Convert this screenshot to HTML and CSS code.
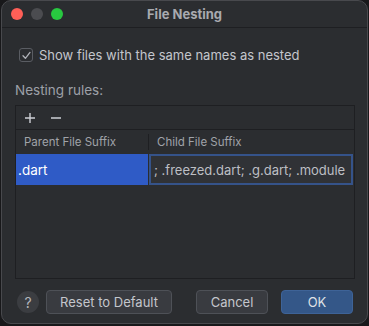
FILE: index.html
```html
<!DOCTYPE html>
<html lang="en">
<head>
    <meta charset="UTF-8">
    <title>File Nesting</title>
    <link rel="stylesheet" href="styles.css">
</head>
<body>
    <div class="window">
        <div class="titlebar">
            <div class="lights">
                <span class="light red"></span>
                <span class="light gray"></span>
                <span class="light green"></span>
            </div>
            <div class="title">File Nesting</div>
            <div></div>
        </div>

        <div class="content">
            <label class="check-row">
                <span class="checkbox">
                    <svg width="11" height="11" viewBox="0 0 11 11"><path d="M2 5.8 L4.4 8.3 L9 2.4" fill="none" stroke="#aeb0b6" stroke-width="1.3" stroke-linecap="round" stroke-linejoin="round"/></svg>
                </span>
                Show files with the same names as nested
            </label>

            <div class="section-label">Nesting rules:</div>

            <div class="rules">
                <div class="toolbar">
                    <svg class="tool" width="12" height="12" viewBox="0 0 12 12"><path d="M6 1 V11 M1 6 H11" stroke="#ced0d6" stroke-width="1.4"/></svg>
                    <svg class="tool" width="12" height="12" viewBox="0 0 12 12"><path d="M1 6 H11" stroke="#ced0d6" stroke-width="1.4"/></svg>
                </div>
                <div class="grid header">
                    <div class="cell">Parent File Suffix</div>
                    <div class="cell">Child File Suffix</div>
                </div>
                <div class="grid row">
                    <div class="cell selected">.dart</div>
                    <div class="cell editor">; .freezed.dart; .g.dart; .module</div>
                </div>
                <div class="empty"></div>
            </div>
        </div>

        <div class="footer">
            <span class="help">?</span>
            <button class="btn">Reset to Default</button>
            <span class="spacer"></span>
            <button class="btn">Cancel</button>
            <button class="btn primary">OK</button>
        </div>
    </div>
</body>
</html>
```

FILE: styles.css
```css
/* Dialog */
body {
    margin: 0;
    padding: 0;
    background: #18181a;
    font-family: 'Inter', 'Noto Sans', sans-serif;
    font-size: 13px;
    color: #c4c6cc;
}
.window {
    width: 365px;
    height: 322px;
    margin-left: 1px;
    background: #2b2d30;
    border: 1px solid #48494d;
    border-radius: 10px;
    display: flex;
    flex-direction: column;
    overflow: hidden;
}
.titlebar {
    height: 28px;
    border-bottom: 1px solid #1e1f22;
    display: grid;
    grid-template-columns: 1fr auto 1fr;
    align-items: center;
}
.lights {
    display: flex;
    gap: 8px;
    padding-left: 9px;
}
.light {
    width: 12px;
    height: 12px;
    border-radius: 50%;
}
.light.red { background: #fe5f57; }
.light.gray { background: #4b4c50; }
.light.green { background: #28c840; }
.title {
    font-weight: 700;
    color: #a8aaaf;
    font-size: 13px;
}

.content {
    padding: 0 12px 0 13px;
    flex: 1;
    display: flex;
    flex-direction: column;
}
.check-row {
    display: flex;
    align-items: center;
    gap: 6px;
    margin-top: 20px;
    padding-left: 4px;
    height: 14px;
}
.checkbox {
    width: 12px;
    height: 12px;
    border: 1px solid #5a5d63;
    border-radius: 3px;
    background: #2b2d30;
    display: flex;
    align-items: center;
    justify-content: center;
}
.section-label {
    margin-top: 20px;
    height: 16px;
    color: #9da0a8;
    font-size: 13.5px;
}
.rules {
    margin-top: 7px;
    border: 1px solid #1e1f22;
    height: 172px;
    display: flex;
    flex-direction: column;
}
.toolbar {
    height: 23px;
    border-bottom: 1px solid #1e1f22;
    display: flex;
    align-items: center;
    gap: 14px;
    padding-left: 8px;
}
.grid {
    display: grid;
    grid-template-columns: 132px 1fr;
}
.header {
    height: 24px;
    align-items: center;
    font-size: 11.5px;
    color: #a0a3a9;
}
.header .cell {
    padding-left: 8px;
    line-height: 16px;
}
.header .cell + .cell {
    border-left: 1px solid #1e1f22;
    padding-left: 8px;
}
.row {
    height: 31px;
}
.row .cell {
    display: flex;
    align-items: center;
}
.selected {
    background: #2f5bc6;
    color: #ffffff;
    padding-left: 2px;
    font-size: 13.5px;
}
.editor {
    background: #303236;
    border: 2px solid #35538a;
    padding-left: 3px;
    margin-left: 1px;
    margin-right: 1px;
    color: #bdbfc4;
    font-size: 13px;
    white-space: nowrap;
    overflow: hidden;
}
.empty {
    flex: 1;
}

.footer {
    height: 45px;
    display: flex;
    align-items: center;
    padding: 2px 14px 0 15px;
    gap: 7px;
}
.help {
    width: 22px;
    height: 22px;
    border-radius: 50%;
    background: #3b3d41;
    color: #b4b6bc;
    font-size: 14px;
    display: flex;
    align-items: center;
    justify-content: center;
}
.btn {
    height: 24px;
    padding: 0 12px;
    font-family: inherit;
    font-size: 13px;
    color: #c4c6cc;
    background: #393b40;
    border: 1px solid #4e5157;
    border-radius: 4px;
}
.btn + .btn {
    margin-left: 6px;
}
.btn.primary {
    background: #345788;
    border-color: #3e6397;
    color: #dfe1e5;
    width: 72px;
}
.spacer {
    flex: 1;
}
.footer .btn:nth-of-type(2) {
    width: 72px;
}
.footer .btn:first-of-type {
    width: 126px;
}
```
